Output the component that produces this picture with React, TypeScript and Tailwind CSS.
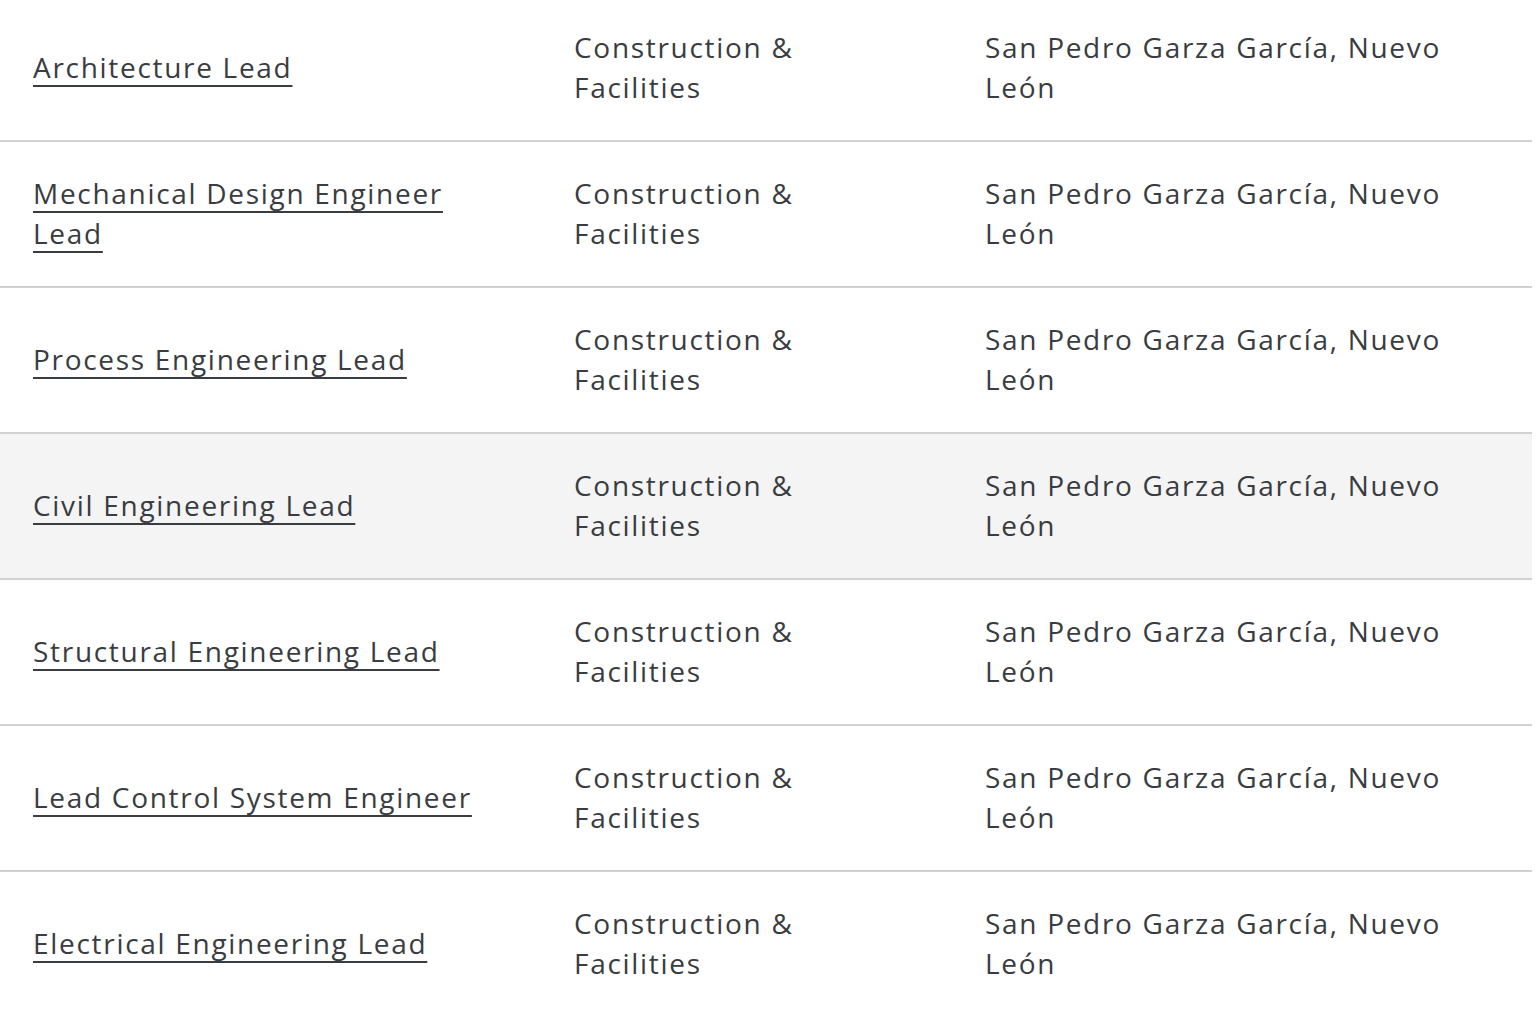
const jobs = [
  'Architecture Lead',
  'Mechanical Design Engineer Lead',
  'Process Engineering Lead',
  'Civil Engineering Lead',
  'Structural Engineering Lead',
  'Lead Control System Engineer',
  'Electrical Engineering Lead',
]

export default function App() {
  return (
    <div className="min-h-screen overflow-hidden bg-white font-['Open_Sans',sans-serif] text-[28px] leading-[40px] tracking-[1.7px] text-[#393c41]">
      <div className="-mt-[4px] w-[1532px]">
        {jobs.map((title, i) => (
          <div
            key={title}
            className={
              'grid h-[146px] grid-cols-[541px_411px_580px] items-center border-b-2 border-[#d0d1d2] ' +
              (i === 3 ? 'bg-[#f4f4f4]' : 'bg-white')
            }
          >
            <div className="px-[33px] pb-[2px]">
              <a
                href="#"
                className="underline decoration-2 underline-offset-[7px] decoration-[#393c41]"
              >
                {title}
              </a>
            </div>
            <div className="px-[33px] pb-[2px]">Construction &amp; Facilities</div>
            <div className="px-[33px] pb-[2px]">San Pedro Garza García, Nuevo León</div>
          </div>
        ))}
      </div>
    </div>
  )
}
